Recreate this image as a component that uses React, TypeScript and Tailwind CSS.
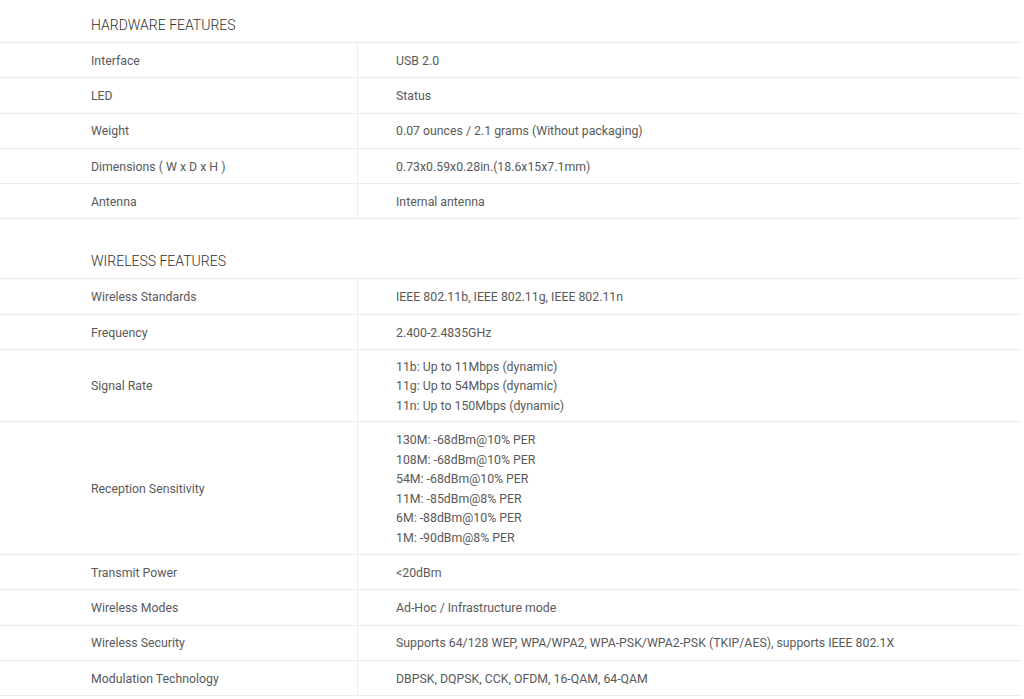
import React from 'react';

interface Spec {
  label: string;
  value: string[];
  tight?: boolean;
}

interface Section {
  title: string;
  specs: Spec[];
}

const sections: Section[] = [
  {
    title: 'HARDWARE FEATURES',
    specs: [
      { label: 'Interface', value: ['USB 2.0'] },
      { label: 'LED', value: ['Status'] },
      { label: 'Weight', value: ['0.07 ounces / 2.1 grams (Without packaging)'] },
      { label: 'Dimensions ( W x D x H )', value: ['0.73x0.59x0.28in.(18.6x15x7.1mm)'] },
      { label: 'Antenna', value: ['Internal antenna'] },
    ],
  },
  {
    title: 'WIRELESS FEATURES',
    specs: [
      { label: 'Wireless Standards', value: ['IEEE 802.11b, IEEE 802.11g, IEEE 802.11n'] },
      { label: 'Frequency', value: ['2.400-2.4835GHz'] },
      {
        label: 'Signal Rate',
        value: ['11b: Up to 11Mbps (dynamic)', '11g: Up to 54Mbps (dynamic)', '11n: Up to 150Mbps (dynamic)'],
        tight: true,
      },
      {
        label: 'Reception Sensitivity',
        value: [
          '130M: -68dBm@10% PER',
          '108M: -68dBm@10% PER',
          '54M: -68dBm@10% PER',
          '11M: -85dBm@8% PER',
          '6M: -88dBm@10% PER',
          '1M: -90dBm@8% PER',
        ],
      },
      { label: 'Transmit Power', value: ['<20dBm'] },
      { label: 'Wireless Modes', value: ['Ad-Hoc / Infrastructure mode'] },
      {
        label: 'Wireless Security',
        value: ['Supports 64/128 WEP, WPA/WPA2, WPA-PSK/WPA2-PSK (TKIP/AES), supports IEEE 802.1X'],
      },
      { label: 'Modulation Technology', value: ['DBPSK, DQPSK, CCK, OFDM, 16-QAM, 64-QAM'] },
    ],
  },
];

const SpecRow: React.FC<{ spec: Spec }> = ({ spec }) => (
  <div className="flex border-b border-[#ececec]">
    <div className="w-[358px] shrink-0 flex items-center pl-[91px] pt-[3px] border-r border-[#ececec] text-[#595959]">
      {spec.label}
    </div>
    <div
      className={`flex-1 pl-[38px] text-[#595959] ${
        spec.tight ? 'pt-[7.9px] pb-[4.9px]' : 'pt-[8.9px] pb-[5.9px]'
      }`}
    >
      {spec.value.map((line, i) => (
        <div key={i}>{line}</div>
      ))}
    </div>
  </div>
);

const App: React.FC = () => {
  return (
    <div
      className="w-[1021px] bg-white text-[12.3px] leading-[19.5px]"
      style={{ fontFamily: 'Roboto, "Liberation Sans", sans-serif' }}
    >
      {sections.map((section, idx) => (
        <div key={section.title} className={idx > 0 ? 'mt-[17px]' : ''}>
          <h2 className="pl-[91px] pt-[15px] pb-[7px] text-[14px] leading-[20px] font-light text-[#2f2f2f] border-b border-[#ececec]">
            {section.title}
          </h2>
          {section.specs.map((spec) => (
            <SpecRow key={spec.label} spec={spec} />
          ))}
        </div>
      ))}
    </div>
  );
};

export default App;
